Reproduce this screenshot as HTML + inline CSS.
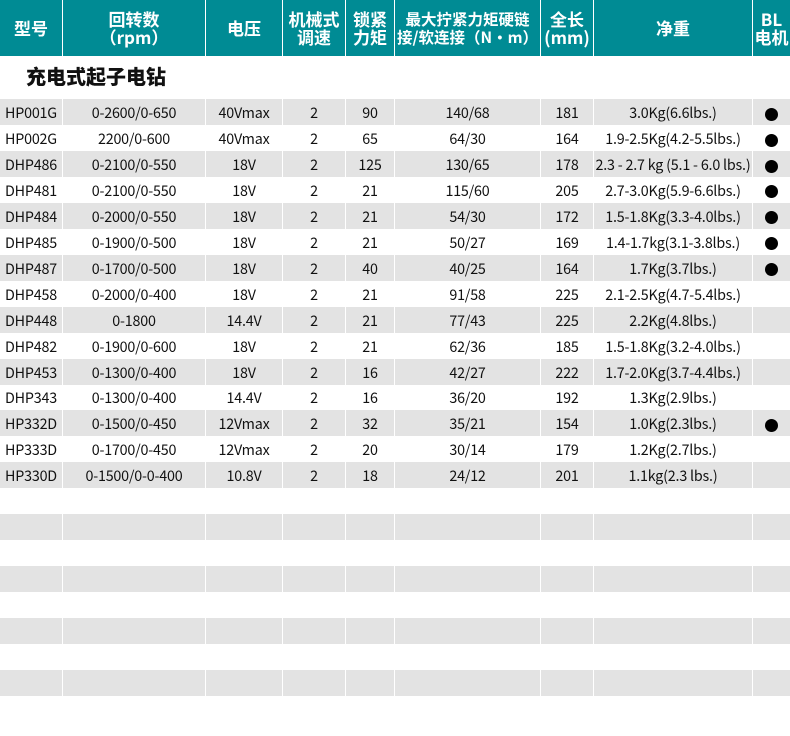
<!DOCTYPE html>
<html><head><meta charset="utf-8"><style>
*{margin:0;padding:0;box-sizing:border-box}
body{width:790px;height:736px;background:#fff;font-family:"Liberation Sans","Noto Sans CJK SC",sans-serif;position:relative;overflow:hidden;color:#111}
.hd{position:absolute;top:0;height:56px;background:#008b94;color:#fff;font-weight:bold;font-family:"Noto Sans CJK SC",sans-serif;font-size:17px;line-height:18px;display:flex;align-items:center;justify-content:center;text-align:center}
.title{position:absolute;left:26px;top:61px;font-family:"Noto Sans CJK SC",sans-serif;font-weight:900;font-size:20px;color:#111}
.row{position:absolute;left:0;width:790px;height:26px}
.c{position:absolute;top:0;height:26px;line-height:27px;text-align:center;font-family:"Noto Sans CJK SC",sans-serif;font-size:14.3px;color:#111;white-space:nowrap;letter-spacing:-0.2px}
.g .c{background:#e3e3e3}
.dot{display:inline-block;width:13px;height:13px;border-radius:50%;background:#000;vertical-align:middle}
</style></head><body>
<div class="hd" style="left:0;width:62px">型号</div>
<div class="hd" style="left:63px;width:142px">回转数<br>（rpm）</div>
<div class="hd" style="left:206px;width:76px">电压</div>
<div class="hd" style="left:283px;width:62px">机械式<br>调速</div>
<div class="hd" style="left:346px;width:48px">锁紧<br>力矩</div>
<div class="hd" style="left:395px;width:145px;font-size:15.5px">最大拧紧力矩硬链<br>接/软连接（N·m）</div>
<div class="hd" style="left:541px;width:52px">全长<br>(mm)</div>
<div class="hd" style="left:594px;width:158px">净重</div>
<div class="hd" style="left:753px;width:37px">BL<br>电机</div>
<div class="title">充电式起子电钻</div>
<div id="rows"></div>
<script>
var cols=[[0,62],[63,142],[206,76],[283,62],[346,48],[395,145],[541,52],[594,158],[753,37]];
var d=[
["HP001G","0-2600/0-650","40Vmax","2","90","140/68","181","3.0Kg(6.6lbs.)",1],
["HP002G","2200/0-600","40Vmax","2","65","64/30","164","1.9-2.5Kg(4.2-5.5lbs.)",1],
["DHP486","0-2100/0-550","18V","2","125","130/65","178","2.3 - 2.7 kg (5.1 - 6.0 lbs.)",1],
["DHP481","0-2100/0-550","18V","2","21","115/60","205","2.7-3.0Kg(5.9-6.6lbs.)",1],
["DHP484","0-2000/0-550","18V","2","21","54/30","172","1.5-1.8Kg(3.3-4.0lbs.)",1],
["DHP485","0-1900/0-500","18V","2","21","50/27","169","1.4-1.7kg(3.1-3.8lbs.)",1],
["DHP487","0-1700/0-500","18V","2","40","40/25","164","1.7Kg(3.7lbs.)",1],
["DHP458","0-2000/0-400","18V","2","21","91/58","225","2.1-2.5Kg(4.7-5.4lbs.)",0],
["DHP448","0-1800","14.4V","2","21","77/43","225","2.2Kg(4.8lbs.)",0],
["DHP482","0-1900/0-600","18V","2","21","62/36","185","1.5-1.8Kg(3.2-4.0lbs.)",0],
["DHP453","0-1300/0-400","18V","2","16","42/27","222","1.7-2.0Kg(3.7-4.4lbs.)",0],
["DHP343","0-1300/0-400","14.4V","2","16","36/20","192","1.3Kg(2.9lbs.)",0],
["HP332D","0-1500/0-450","12Vmax","2","32","35/21","154","1.0Kg(2.3lbs.)",1],
["HP333D","0-1700/0-450","12Vmax","2","20","30/14","179","1.2Kg(2.7lbs.)",0],
["HP330D","0-1500/0-0-400","10.8V","2","18","24/12","201","1.1kg(2.3 lbs.)",0]];
var h="";
for(var i=0;i<23;i++){var r=d[i]||["","","","","","","","",0];
h+='<div class="row'+(i%2==0?' g':'')+'" style="top:'+(99+i*25.95)+'px">';
for(var j=0;j<9;j++){var t=j==8?(r[8]?'<span class="dot"></span>':''):r[j];
h+='<div class="c" style="left:'+cols[j][0]+'px;width:'+cols[j][1]+'px">'+t+'</div>';}
h+='</div>';}
document.getElementById('rows').innerHTML=h;
</script>
</body></html>
